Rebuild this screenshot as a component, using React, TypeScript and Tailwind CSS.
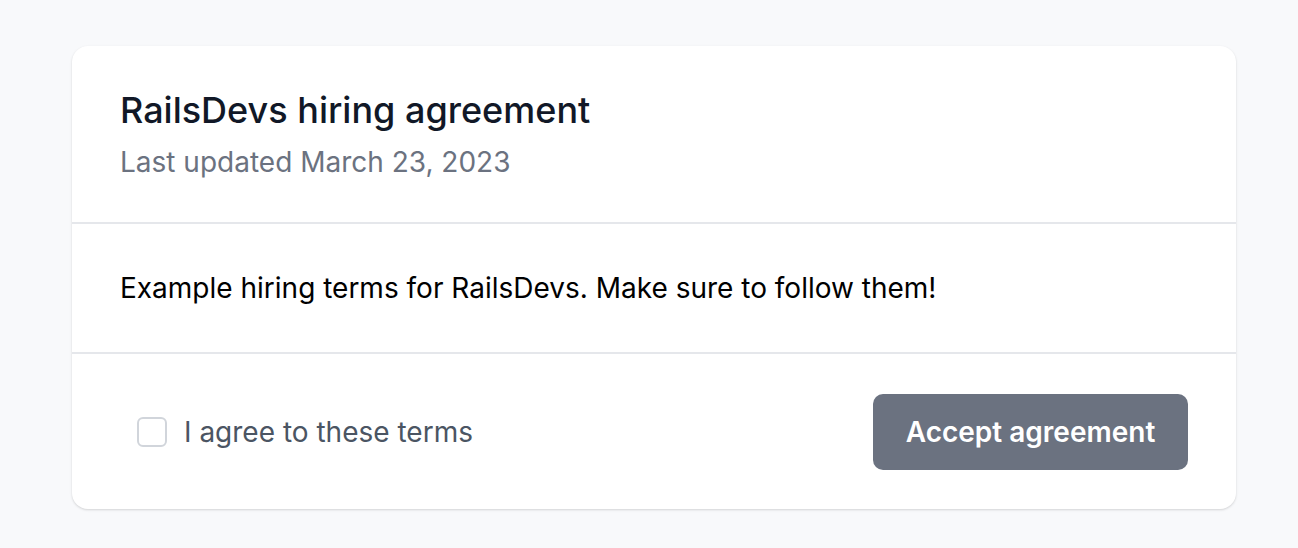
export default function App() {
  return (
    <div className="min-h-screen bg-[#f8f9fb] pl-[72px] pr-[62px] pt-[46px] pb-[39px] font-['Inter',sans-serif]">
      <div className="rounded-[16px] bg-white shadow-[0_1px_3px_rgba(0,0,0,0.1),0_1px_2px_rgba(0,0,0,0.06)]">
        {/* header */}
        <div className="border-b-2 border-[#e5e7eb] px-[48px] pt-[42px] pb-[42px]">
          <h1 className="text-[36px] leading-[44px] font-medium text-[#111827]">RailsDevs hiring agreement</h1>
          <p className="mt-[12px] text-[28px] leading-[36px] text-[#6b7280]">Last updated March 23, 2023</p>
        </div>

        {/* body */}
        <div className="border-b-2 border-[#e5e7eb] px-[48px] py-[46px]">
          <p className="text-[28px] leading-[36px] text-black">
            Example hiring terms for RailsDevs. Make sure to follow them!
          </p>
        </div>

        {/* footer */}
        <div className="flex items-center justify-between px-[48px] h-[155px]">
          <label className="ml-[17px] flex items-center gap-[17px]">
            <span className="block h-[30px] w-[30px] rounded-[6px] border-2 border-[#d1d5db] bg-white" />
            <span className="text-[28px] leading-[36px] text-[#4b5563]">I agree to these terms</span>
          </label>
          <button className="h-[76px] w-[315px] rounded-[10px] bg-[#6b7280] text-[28px] font-semibold text-white">
            Accept agreement
          </button>
        </div>
      </div>
    </div>
  )
}
